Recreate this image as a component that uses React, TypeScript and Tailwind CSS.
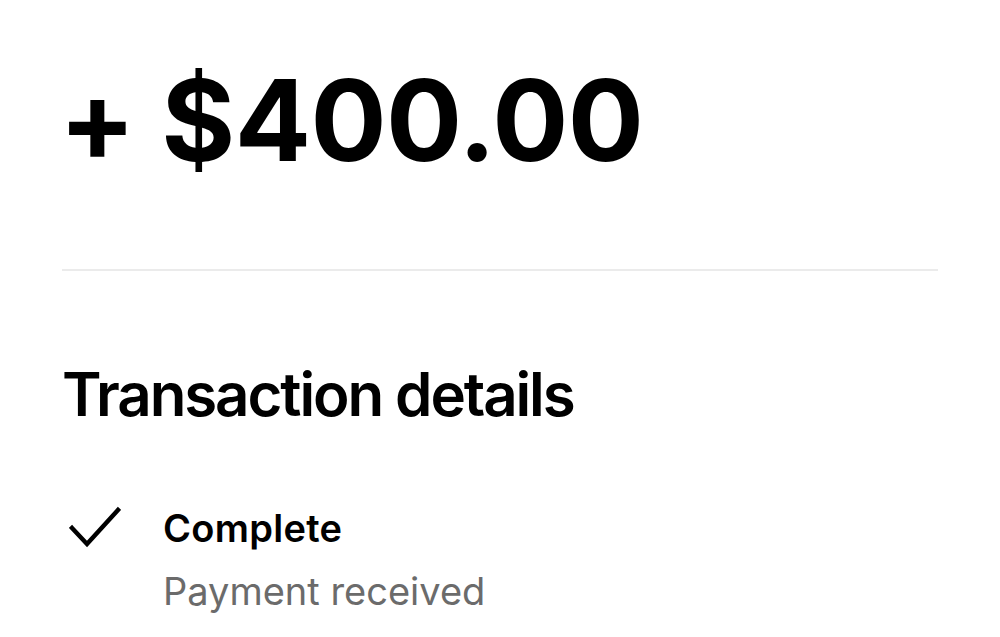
const App = () => {
  return (
    <div className="w-[1000px] h-[637px] bg-white overflow-hidden font-['Inter',sans-serif] text-black">
      <div className="px-[62px] pt-[52px]">
        <h1 className="-ml-[3px] text-[113px] leading-[136px] font-bold tracking-[-0.6px]">
          + $400.00
        </h1>

        <div className="mt-[81px] h-[2px] bg-[#ebebeb]" />

        <h2 className="mt-[87px] text-[60px] leading-[72px] font-semibold tracking-[-2.1px]">
          Transaction details
        </h2>

        <div className="mt-[76px] flex gap-[42px]">
          <svg
            width="52"
            height="42"
            viewBox="0 0 52 42"
            fill="none"
            stroke="currentColor"
            strokeWidth="4.5"
            strokeLinecap="square"
            className="ml-[7px] shrink-0"
          >
            <path d="M3 22 L18 38 L49 4" />
          </svg>
          <div>
            <div className="text-[38px] leading-[44px] font-semibold tracking-[0.3px]">Complete</div>
            <div className="mt-[19px] text-[38px] leading-[44px] text-[#6b6b6b]">
              Payment received
            </div>
          </div>
        </div>
      </div>
    </div>
  );
};

export default App;
